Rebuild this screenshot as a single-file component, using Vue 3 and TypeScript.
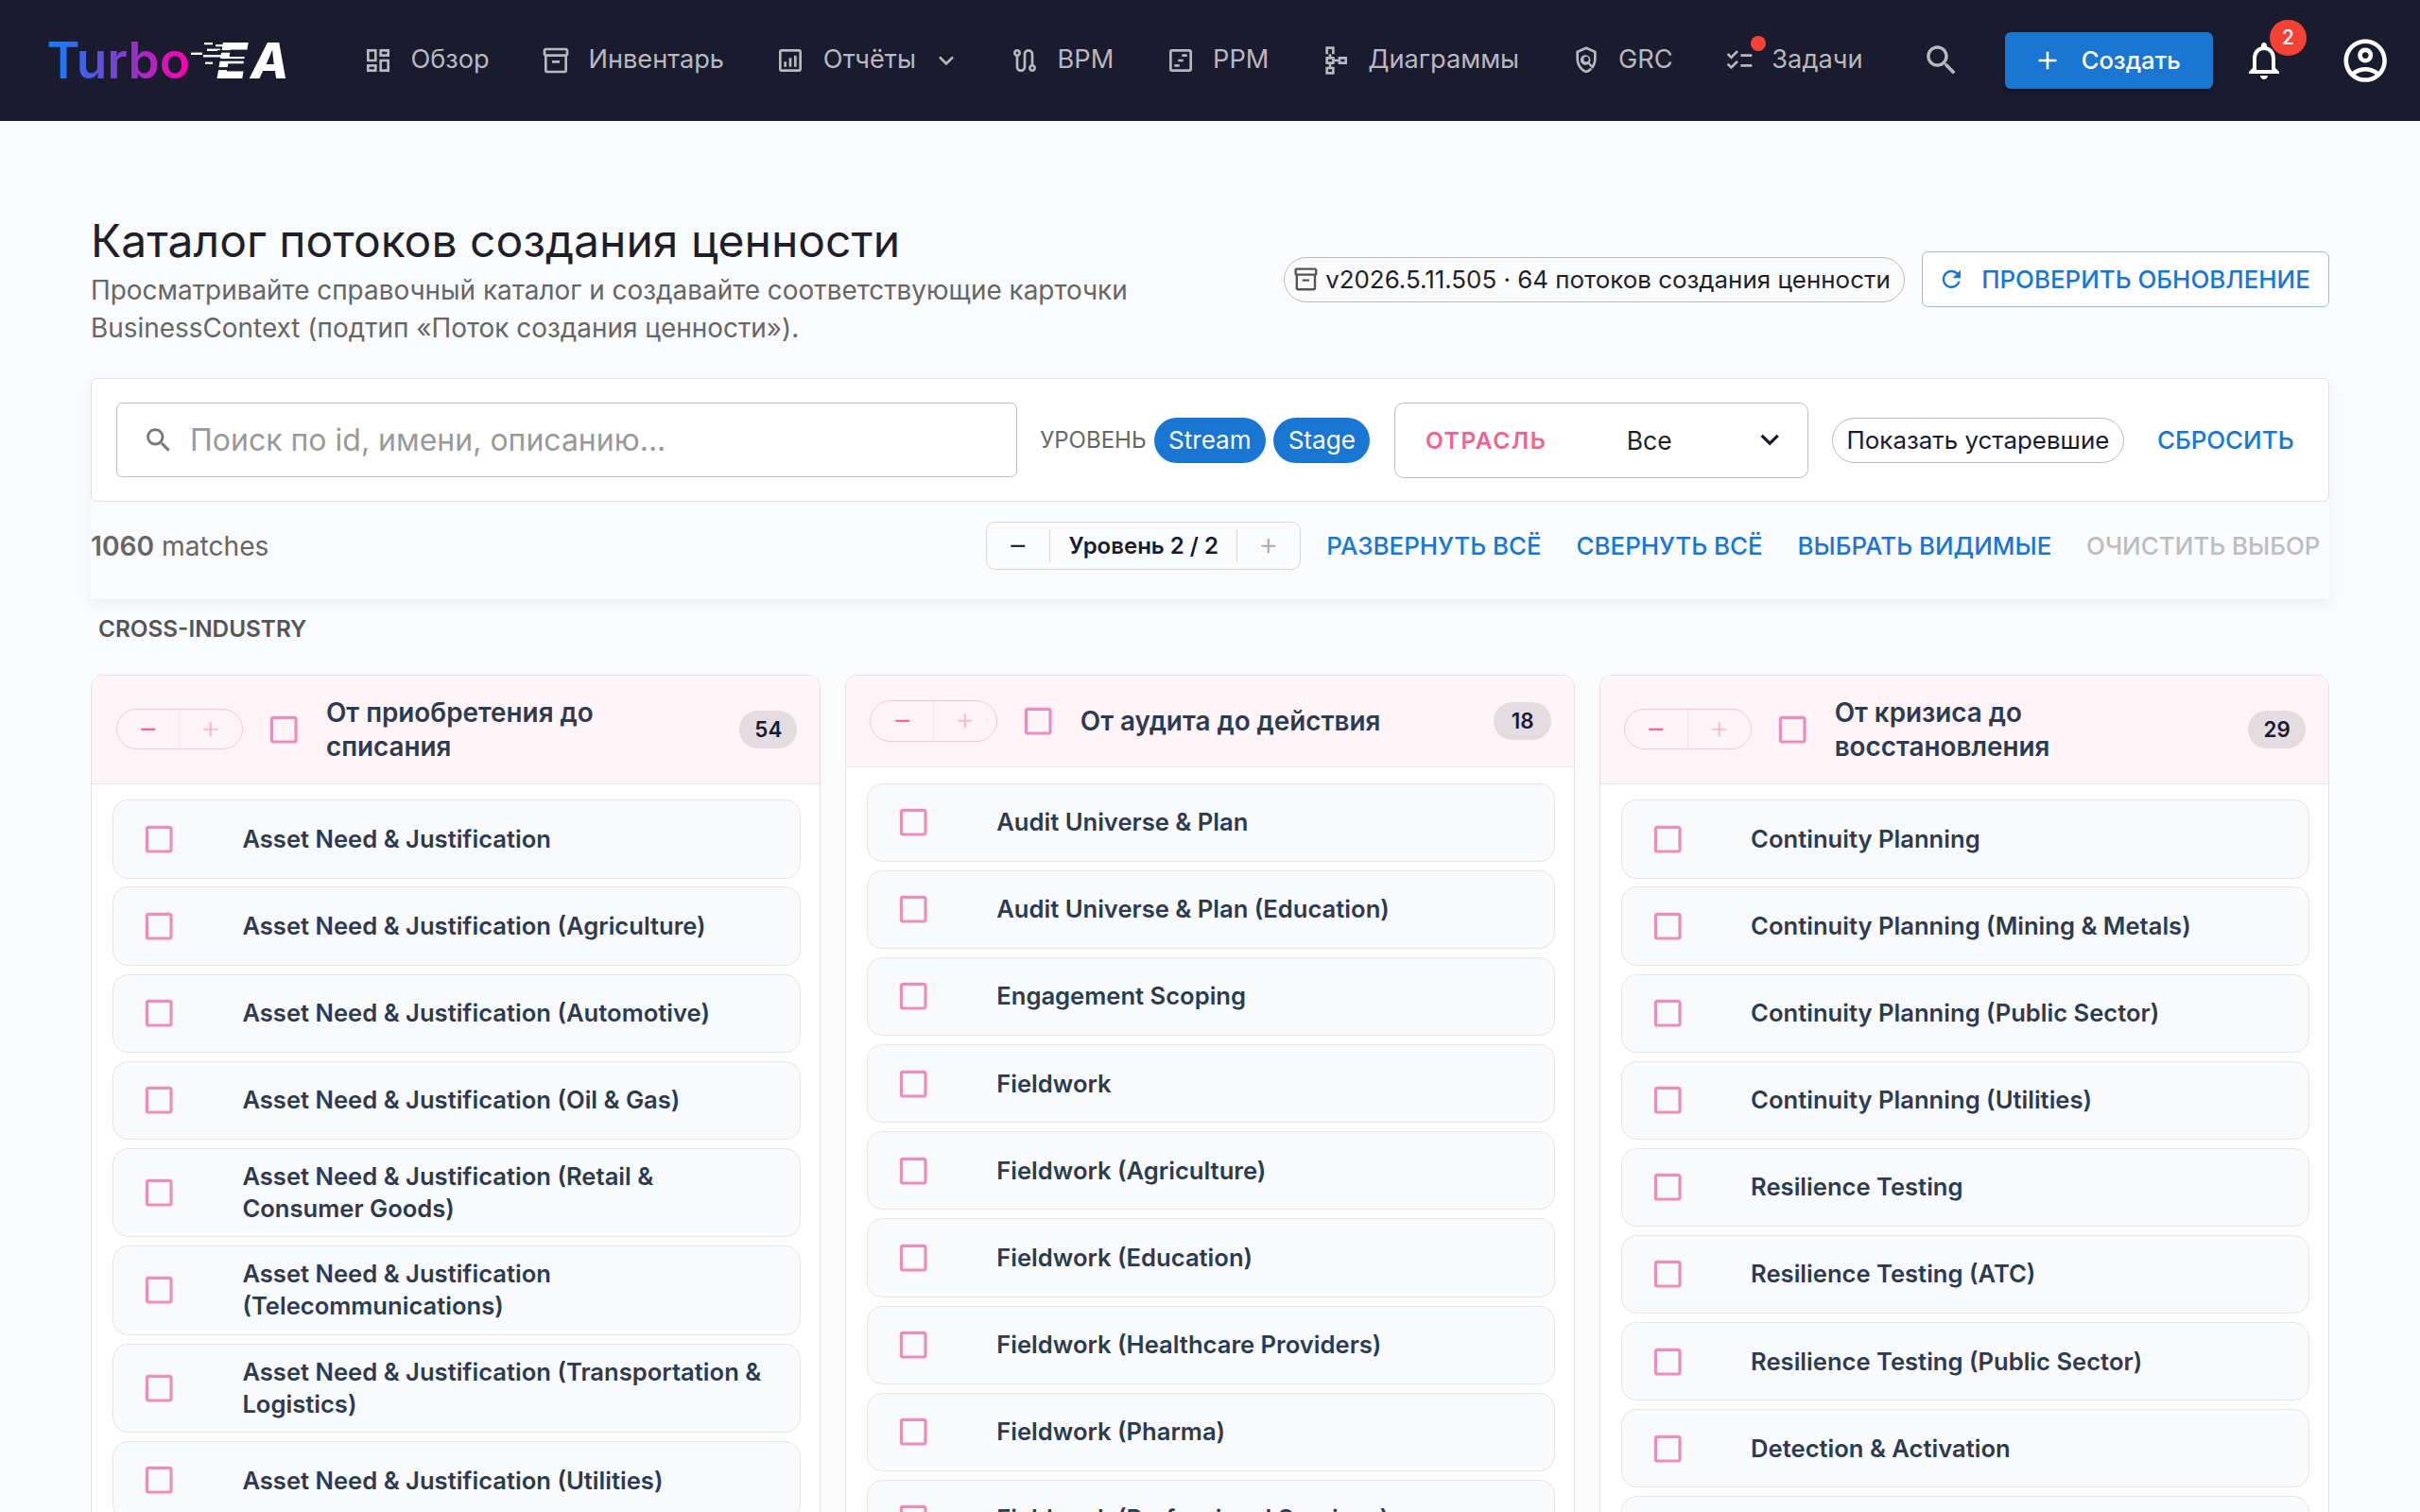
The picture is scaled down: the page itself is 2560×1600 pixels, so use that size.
<template>
  <div class="app">
    <header class="topbar">
      <div class="logo">
        <span class="logo-turbo">Turbo</span>
        <span class="logo-ea">EA</span>
        <svg class="logo-lines" viewBox="0 0 280 75">
          <g fill="#fff">
            <rect x="162" y="29.5" width="12" height="2.4" />
            <rect x="176" y="19" width="9" height="2.2" />
            <rect x="188" y="21" width="10" height="2.2" />
            <rect x="179" y="25.5" width="14" height="2.4" />
            <rect x="175" y="32" width="20" height="2.4" />
            <rect x="177" y="39.5" width="8" height="2.2" />
          </g>
          <g fill="#1a1b2e">
            <rect x="190" y="27" width="40" height="2.6" />
            <rect x="192" y="36" width="36" height="2.6" />
            <rect x="186" y="45" width="36" height="3" />
          </g>
        </svg>
      </div>
      <nav class="nav">
        <template v-for="item in navItems" :key="item.label">
          <a class="nav-item">
            <span class="nav-icon-wrap">
              <svg class="nav-icon" viewBox="0 0 24 24"><path :d="item.icon" /></svg>
              <span v-if="item.dot" class="nav-dot"></span>
            </span>
            <span class="nav-label">{{ item.label }}</span>
            <svg v-if="item.caret" class="nav-caret" viewBox="0 0 24 24"><path :d="icons.expand" /></svg>
          </a>
        </template>
      </nav>
      <div class="topbar-right">
        <svg class="search-btn" viewBox="0 0 24 24"><path :d="icons.search" /></svg>
        <button class="create-btn">
          <svg viewBox="0 0 24 24"><path :d="icons.add" /></svg>
          Создать
        </button>
        <span class="bell">
          <svg viewBox="0 0 24 24"><path :d="icons.bell" /></svg>
          <span class="bell-badge">2</span>
        </span>
        <svg class="account" viewBox="0 0 24 24"><path :d="icons.account" /></svg>
      </div>
    </header>

    <main class="page">
      <section class="page-head">
        <div class="page-title-box">
          <h1>Каталог потоков создания ценности</h1>
          <p>Просматривайте справочный каталог и создавайте соответствующие карточки BusinessContext (подтип «Поток создания ценности»).</p>
        </div>
        <div class="page-actions">
          <span class="version-chip">
            <svg viewBox="0 0 24 24"><path :d="icons.inventory" /></svg>
            v2026.5.11.505 · 64 потоков создания ценности
          </span>
          <button class="check-btn">
            <svg viewBox="0 0 24 24"><path :d="icons.refresh" /></svg>
            ПРОВЕРИТЬ ОБНОВЛЕНИЕ
          </button>
        </div>
      </section>

      <section class="toolbar">
        <div class="filters">
          <div class="search-field">
            <svg viewBox="0 0 24 24"><path :d="icons.search" /></svg>
            <span>Поиск по id, имени, описанию...</span>
          </div>
          <span class="level-label">УРОВЕНЬ</span>
          <span class="level-chip">Stream</span>
          <span class="level-chip">Stage</span>
          <div class="industry-select">
            <span class="industry-label">ОТРАСЛЬ</span>
            <span class="industry-value">Все</span>
            <svg viewBox="0 0 24 24"><path :d="icons.expand" /></svg>
          </div>
          <span class="deprecated-chip">Показать устаревшие</span>
          <a class="text-btn reset">СБРОСИТЬ</a>
        </div>
        <div class="stats">
          <span class="matches"><b>1060</b> matches</span>
          <div class="stepper">
            <span class="step"><svg viewBox="0 0 24 24"><path :d="icons.remove" /></svg></span>
            <span class="step-label">Уровень 2 / 2</span>
            <span class="step off"><svg viewBox="0 0 24 24"><path :d="icons.add" /></svg></span>
          </div>
          <a class="text-btn">РАЗВЕРНУТЬ ВСЁ</a>
          <a class="text-btn">СВЕРНУТЬ ВСЁ</a>
          <a class="text-btn">ВЫБРАТЬ ВИДИМЫЕ</a>
          <a class="text-btn disabled">ОЧИСТИТЬ ВЫБОР</a>
        </div>
      </section>

      <h2 class="group-title">CROSS-INDUSTRY</h2>

      <section class="columns">
        <article v-for="col in columns" :key="col.title" class="column">
          <div class="col-head">
            <div class="pill">
              <span class="pill-side"><svg viewBox="0 0 24 24"><path :d="icons.remove" /></svg></span>
              <span class="pill-side faded"><svg viewBox="0 0 24 24"><path :d="icons.add" /></svg></span>
            </div>
            <span class="check"><svg viewBox="0 0 24 24"><path :d="icons.box" /></svg></span>
            <div class="col-title">{{ col.title }}</div>
            <span class="col-count">{{ col.count }}</span>
          </div>
          <div class="col-body">
            <div v-for="row in col.rows" :key="row" class="row">
              <span class="check"><svg viewBox="0 0 24 24"><path :d="icons.box" /></svg></span>
              <span class="row-text">{{ row }}</span>
            </div>
          </div>
        </article>
      </section>
    </main>
  </div>
</template>

<script setup lang="ts">
interface NavItem {
  label: string;
  icon: string;
  caret?: boolean;
  dot?: boolean;
}

interface StreamColumn {
  title: string;
  count: number;
  rows: string[];
}

const icons = {
  expand: "M16.59 8.59 12 13.17 7.41 8.59 6 10l6 6 6-6z",
  search:
    "M15.5 14h-.79l-.28-.27C15.41 12.59 16 11.11 16 9.5 16 5.91 13.09 3 9.5 3S3 5.91 3 9.5 5.91 16 9.5 16c1.61 0 3.09-.59 4.23-1.57l.27.28v.79l5 4.99L20.49 19l-4.99-5zm-6 0C7.01 14 5 11.99 5 9.5S7.01 5 9.5 5 14 7.01 14 9.5 11.99 14 9.5 14z",
  add: "M19 13h-6v6h-2v-6H5v-2h6V5h2v6h6v2z",
  remove: "M19 13H5v-2h14v2z",
  box: "M19 5v14H5V5h14m0-2H5c-1.1 0-2 .9-2 2v14c0 1.1.9 2 2 2h14c1.1 0 2-.9 2-2V5c0-1.1-.9-2-2-2z",
  bell: "M12 22c1.1 0 2-.9 2-2h-4c0 1.1.9 2 2 2zm6-6v-5c0-3.07-1.63-5.64-4.5-6.32V4c0-.83-.67-1.5-1.5-1.5s-1.5.67-1.5 1.5v.68C7.64 5.36 6 7.92 6 11v5l-2 2v1h16v-1l-2-2zm-2 1H8v-6c0-2.48 1.51-4.5 4-4.5s4 2.02 4 4.5v6z",
  account:
    "M12 2C6.48 2 2 6.48 2 12s4.48 10 10 10 10-4.48 10-10S17.52 2 12 2zM7.35 18.5C8.66 17.56 10.26 17 12 17s3.34.56 4.65 1.5c-1.31.94-2.91 1.5-4.65 1.5s-3.34-.56-4.65-1.5zm10.79-1.38C16.45 15.8 14.32 15 12 15s-4.45.8-6.14 2.12C4.7 15.73 4 13.95 4 12c0-4.42 3.58-8 8-8s8 3.58 8 8c0 1.95-.7 3.73-1.86 5.12zM12 6c-1.93 0-3.5 1.57-3.5 3.5S10.07 13 12 13s3.5-1.57 3.5-3.5S13.93 6 12 6zm0 5c-.83 0-1.5-.67-1.5-1.5S11.17 8 12 8s1.5.67 1.5 1.5S12.83 11 12 11z",
  inventory:
    "M20 2H4c-1 0-2 .9-2 2v3.01c0 .72.43 1.34 1 1.69V20c0 1.1 1.1 2 2 2h14c.9 0 2-.9 2-2V8.7c.57-.35 1-.97 1-1.69V4c0-1.1-1-2-2-2zm-1 18H5V9h14v11zm1-13H4V4h16v3zM9 12h6v2H9z",
  refresh:
    "M17.65 6.35C16.2 4.9 14.21 4 12 4c-4.42 0-7.99 3.58-7.99 8s3.57 8 7.99 8c3.73 0 6.84-2.55 7.73-6h-2.08c-.82 2.33-3.04 4-5.65 4-3.31 0-6-2.69-6-6s2.69-6 6-6c1.66 0 3.14.69 4.22 1.78L13 11h7V4l-2.35 2.35z",
};

const navItems: NavItem[] = [
  {
    label: "Обзор",
    icon: "M19 5v2h-4V5h4M9 5v6H5V5h4m10 8v6h-4v-6h4M9 17v2H5v-2h4M21 3h-8v6h8V3zM11 3H3v10h8V3zm10 8h-8v10h8V11zm-10 4H3v6h8v-6z",
  },
  { label: "Инвентарь", icon: icons.inventory },
  {
    label: "Отчёты",
    caret: true,
    icon: "M19 3H5c-1.1 0-2 .9-2 2v14c0 1.1.9 2 2 2h14c1.1 0 2-.9 2-2V5c0-1.1-.9-2-2-2zm0 16H5V5h14v14zM7 17h2v-4H7zm4 0h2v-7h-2zm4 0h2v-9h-2z",
  },
  {
    label: "BPM",
    icon: "M19 15.18V7c0-2.21-1.79-4-4-4s-4 1.79-4 4v10c0 1.1-.9 2-2 2s-2-.9-2-2V8.82C8.16 8.4 9 7.3 9 6c0-1.66-1.34-3-3-3S3 4.34 3 6c0 1.3.84 2.4 2 2.82V17c0 2.21 1.79 4 4 4s4-1.79 4-4V7c0-1.1.9-2 2-2s2 .9 2 2v8.18c-1.16.41-2 1.51-2 2.82 0 1.66 1.34 3 3 3s3-1.34 3-3c0-1.3-.84-2.4-2-2.82zM6 7c-.55 0-1-.45-1-1s.45-1 1-1 1 .45 1 1-.45 1-1 1zm12 12c-.55 0-1-.45-1-1s.45-1 1-1 1 .45 1 1-.45 1-1 1z",
  },
  {
    label: "PPM",
    icon: "M19 3H5c-1.1 0-2 .9-2 2v14c0 1.1.9 2 2 2h14c1.1 0 2-.9 2-2V5c0-1.1-.9-2-2-2zm0 16H5V5h14v14zM7 15h4v2H7zm3-4h4v2h-4zm3-4h4v2h-4z",
  },
  {
    label: "Диаграммы",
    icon: "M14 9v2h-3V9H8.5V7H11V1H4v6h2.5v2H4v6h2.5v2H4v6h7v-6H8.5v-2H11v-2h3v2h7V9h-7zM9 7H6V3h3v4zm0 12v2H6v-2h3zm0-8v2H6v-2h3zm10 2h-3v-2h3v2z",
  },
  {
    label: "GRC",
    icon: "M12 1 4 4.5v6c0 5.3 3.4 10.2 8 11.5 1.8-.5 3.4-1.5 4.7-2.9l-1.5-1.4c-.9 1-2 1.8-3.2 2.2-3.4-1.2-6-5.1-6-9.4V5.8l6-2.7 6 2.7v4.7c0 1.9-.5 3.7-1.3 5.3l-1.9-1.9c1-1.6.8-3.7-.6-5.1a4 4 0 1 0-.7 6.2l3.7 3.7C19.1 16.4 20 13.5 20 10.500V4.500L12 1zm0 12a2 2 0 1 1 0-4 2 2 0 0 1 0 4z",
  },
  {
    label: "Задачи",
    dot: true,
    icon: "M22 7h-9v2h9V7zm0 8h-9v2h9v-2zM5.54 11 2 7.46l1.41-1.41 2.12 2.12 4.24-4.24 1.41 1.41L5.54 11zm0 8L2 15.46l1.41-1.41 2.12 2.12 4.24-4.24 1.41 1.41L5.54 19z",
  },
];

const columns: StreamColumn[] = [
  {
    title: "От приобретения до списания",
    count: 54,
    rows: [
      "Asset Need & Justification",
      "Asset Need & Justification (Agriculture)",
      "Asset Need & Justification (Automotive)",
      "Asset Need & Justification (Oil & Gas)",
      "Asset Need & Justification (Retail & Consumer Goods)",
      "Asset Need & Justification (Telecommunications)",
      "Asset Need & Justification (Transportation & Logistics)",
      "Asset Need & Justification (Utilities)",
    ],
  },
  {
    title: "От аудита до действия",
    count: 18,
    rows: [
      "Audit Universe & Plan",
      "Audit Universe & Plan (Education)",
      "Engagement Scoping",
      "Fieldwork",
      "Fieldwork (Agriculture)",
      "Fieldwork (Education)",
      "Fieldwork (Healthcare Providers)",
      "Fieldwork (Pharma)",
      "Fieldwork (Professional Services)",
    ],
  },
  {
    title: "От кризиса до восстановления",
    count: 29,
    rows: [
      "Continuity Planning",
      "Continuity Planning (Mining & Metals)",
      "Continuity Planning (Public Sector)",
      "Continuity Planning (Utilities)",
      "Resilience Testing",
      "Resilience Testing (ATC)",
      "Resilience Testing (Public Sector)",
      "Detection & Activation",
      "Detection & Activation (Utilities)",
    ],
  },
];
</script>

<style scoped>
.app {
  zoom: 1.6;
  width: 1600px;
  height: 1000px;
  overflow: hidden;
  background: #fafbfd;
  font-family: Inter, "Noto Sans", sans-serif;
  color: #1a1a2e;
}

.app * {
  box-sizing: border-box;
}

svg {
  display: block;
  fill: currentColor;
}

/* top bar */
.topbar {
  display: flex;
  align-items: center;
  height: 80px;
  padding: 0 19px 0 31px;
  background: #1a1b2e;
  color: #b8b8be;
}

.logo {
  position: relative;
  display: flex;
  align-items: center;
  width: 209px;
  height: 47px;
  flex: none;
  line-height: 1;
}

.logo-turbo {
  font-size: 33.3px;
  font-weight: 600;
  background: linear-gradient(90deg, #0a84ff, #7a3fd0 50%, #ff00aa);
  -webkit-background-clip: text;
  background-clip: text;
  color: transparent;
}

.logo-ea {
  margin-left: 17.500px;
  font-size: 33px;
  font-weight: 800;
  font-style: italic;
  letter-spacing: 2px;
  color: #fff;
}

.logo-lines {
  position: absolute;
  left: -6px;
  top: 0;
  width: 175px;
  height: 47px;
}

.nav {
  display: flex;
  align-items: center;
  gap: 34px;
  font-size: 17px;
}

.nav-item {
  display: flex;
  align-items: center;
  gap: 11.5px;
}

.nav-label {
  margin-top: -1.5px;
}

.nav-icon-wrap {
  position: relative;
}

.nav-icon {
  width: 20px;
  height: 20px;
}

.nav-dot {
  position: absolute;
  top: -6px;
  right: -7.5px;
  width: 10px;
  height: 10px;
  border-radius: 50%;
  background: #f44336;
}

.nav-caret {
  width: 20px;
  height: 20px;
  margin-left: -1.5px;
  margin-right: -2px;
}

.topbar-right {
  display: flex;
  align-items: center;
  margin-left: auto;
}

.search-btn {
  width: 26px;
  height: 26px;
}

.create-btn {
  display: flex;
  align-items: center;
  gap: 12.5px;
  width: 137.5px;
  height: 38px;
  margin-left: 29px;
  padding: 0 0 0 18px;
  border: none;
  border-radius: 4px;
  background: #1976d2;
  color: #fff;
  font: 500 16px Inter, sans-serif;
  box-shadow: 0 2px 4px rgba(0, 0, 0, 0.3);
}

.create-btn svg {
  width: 20px;
  height: 20px;
}

.bell {
  position: relative;
  margin-left: 19px;
  color: #fff;
}

.bell svg {
  width: 30px;
  height: 30px;
}

.bell-badge {
  position: absolute;
  top: -12px;
  right: -12.75px;
  width: 24px;
  height: 24px;
  border-radius: 50%;
  background: #f44336;
  color: #fff;
  font-size: 13px;
  font-weight: 500;
  line-height: 24px;
  text-align: center;
}

.account {
  width: 34px;
  height: 34px;
  margin-left: 35px;
  color: #fff;
}

/* page */
.page {
  padding: 59.4px 60px 0;
}

.page-head {
  display: flex;
  align-items: center;
  justify-content: space-between;
  margin-bottom: 20.6px;
}

.page-title-box {
  width: 720px;
}

h1 {
  margin: 0;
  font-size: 30px;
  font-weight: 400;
  line-height: 40px;
  color: #1f1f2a;
}

.page-title-box p {
  margin: 0;
  font-size: 17.45px;
  line-height: 25px;
  color: #666;
}

.page-actions {
  display: flex;
  align-items: center;
  gap: 11px;
  margin-top: 1px;
}

.version-chip {
  display: flex;
  align-items: center;
  gap: 4px;
  height: 30px;
  padding: 0 9px 0 5px;
  border: 1px solid #bdbdbd;
  border-radius: 15px;
  font-size: 16.2px;
  color: #1f1f2a;
  white-space: nowrap;
}

.version-chip svg {
  width: 18px;
  height: 18px;
  color: #555;
}

.check-btn {
  display: flex;
  align-items: center;
  gap: 11px;
  height: 37px;
  padding: 0 12px 0 10px;
  border: 1px solid #90bce8;
  border-radius: 4px;
  background: #fff;
  color: #1976d2;
  font: 500 16.2px Inter, sans-serif;
  white-space: nowrap;
}

.check-btn svg {
  width: 18px;
  height: 18px;
}

.toolbar {
  box-shadow: 0 4px 8px rgba(0, 0, 0, 0.06);
}

.filters {
  display: flex;
  align-items: center;
  height: 82px;
  padding: 0 16px;
  border: 1px solid #e0e0e0;
  border-radius: 4px;
  background: #fff;
}

.search-field {
  display: flex;
  align-items: center;
  gap: 10px;
  width: 596px;
  height: 49px;
  padding: 0 0 0 17.4px;
  border: 1px solid #bdbdbd;
  border-radius: 4px;
  color: #999;
  font-size: 20px;
  flex: none;
}

.search-field svg {
  width: 21px;
  height: 21px;
  color: #777;
}

.level-label {
  margin-left: 15px;
  font-size: 15px;
  color: #666;
}

.level-chip {
  display: flex;
  align-items: center;
  height: 30px;
  margin-left: 5px;
  padding: 0 9.7px;
  border-radius: 15px;
  background: #1976d2;
  color: #fff;
  font-size: 16.3px;
}

.industry-select {
  display: flex;
  align-items: center;
  width: 274px;
  height: 50px;
  margin-left: 16px;
  padding: 0 13px 0 20px;
  border: 1px solid #bdbdbd;
  border-radius: 6px;
}

.industry-label {
  width: 133px;
  flex: none;
  color: #f0628f;
  font-size: 15.3px;
  font-weight: 600;
  letter-spacing: 1px;
}

.industry-value {
  font-size: 16.5px;
  color: #1f1f2a;
}

.industry-select svg {
  width: 24px;
  height: 24px;
  margin-left: auto;
}

.deprecated-chip {
  display: flex;
  align-items: center;
  height: 30px;
  margin-left: 15.5px;
  padding: 0 9px;
  border: 1px solid #bdbdbd;
  border-radius: 15px;
  font-size: 16.2px;
  white-space: nowrap;
}

.text-btn {
  color: #1976d2;
  font-size: 16.2px;
  font-weight: 500;
  white-space: nowrap;
}

.text-btn.disabled {
  color: #bdbdbd;
}

.reset {
  margin-left: 22px;
}

.stats {
  display: flex;
  align-items: center;
  height: 64px;
  padding: 0 6px 6px 0;
}

.matches {
  margin-right: auto;
  font-size: 17.6px;
  color: #666;
}

.matches b {
  font-weight: 600;
}

.stepper {
  display: flex;
  align-items: center;
  width: 208px;
  height: 32px;
  margin-right: 17px;
  border: 1px solid #d8d8d8;
  border-radius: 6px;
  font-size: 15px;
  font-weight: 600;
}

.step {
  display: flex;
  justify-content: center;
  width: 41px;
  flex: none;
}

.step svg {
  width: 16px;
  height: 16px;
}

.step.off {
  color: #aaa;
}

.step-label {
  flex: 1;
  padding: 2px 0;
  border-left: 1px solid #d8d8d8;
  border-right: 1px solid #d8d8d8;
  text-align: center;
  white-space: nowrap;
}

.stats .text-btn + .text-btn {
  margin-left: 23px;
}

.group-title {
  margin: 10.6px 0 0 5px;
  height: 39.65px;
  font-size: 15.2px;
  font-weight: 600;
  line-height: 18px;
  color: #555;
}

/* stream columns */
.columns {
  display: grid;
  grid-template-columns: repeat(3, 1fr);
  gap: 16px;
  align-items: start;
}

.column {
  border: 1px solid #e0e0e0;
  border-radius: 8px;
  background: #fff;
  overflow: hidden;
}

.col-head {
  display: flex;
  align-items: center;
  padding: 9px 15px 9px 16px;
  border-bottom: 1px solid #eee2e6;
  background: #fff5f8;
}

.pill {
  display: flex;
  flex: none;
  width: 84px;
  height: 27px;
  border: 1px solid #ffc1d5;
  border-radius: 14px;
}

.pill-side {
  display: flex;
  align-items: center;
  justify-content: center;
  flex: 1;
  color: #ff5c8d;
}

.pill-side + .pill-side {
  border-left: 1px solid #fbdfe8;
}

.pill-side.faded {
  color: #ffb9cf;
}

.pill-side svg {
  width: 16px;
  height: 16px;
}

.check {
  display: flex;
  align-items: center;
  justify-content: center;
  flex: none;
  width: 42px;
  height: 42px;
  color: #ea8ebb;
}

.check svg {
  width: 24px;
  height: 24px;
}

.col-head .check {
  margin-left: 6px;
}

.col-title {
  flex: 1;
  padding: 4px 40px 4px 7px;
  font-size: 17.4px;
  font-weight: 600;
  line-height: 22.5px;
  color: #2d3a4f;
}

.col-count {
  flex: none;
  width: 38px;
  height: 25px;
  border-radius: 12.5px;
  background: #e4dce0;
  font-size: 14px;
  font-weight: 600;
  line-height: 25px;
  text-align: center;
}

.col-body {
  display: flex;
  flex-direction: column;
  gap: 5.6px;
  padding: 10.5px 12.5px 10.5px 13.8px;
}

.row {
  display: flex;
  align-items: center;
  min-height: 52px;
  padding: 4px 20px 4px 9.2px;
  border: 1px solid #e5e5e5;
  border-radius: 10px;
  background: #f9fafc;
}

.row-text {
  padding: 3.5px 0 3.5px 34px;
  font-size: 16px;
  font-weight: 600;
  line-height: 21.4px;
  color: #2d3a4f;
}
</style>

<style>
html,
body {
  margin: 0;
  overflow: hidden;
}
</style>
